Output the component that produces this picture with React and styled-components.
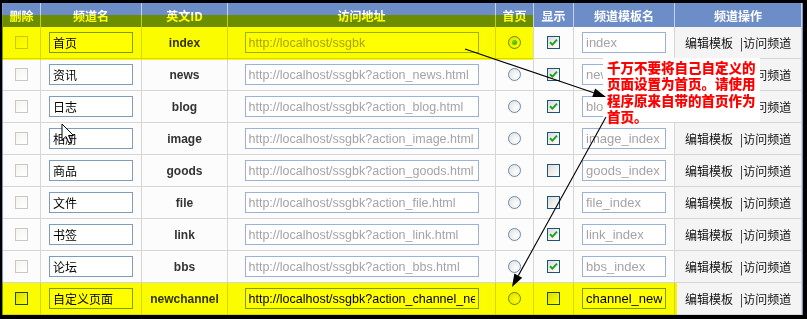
import React from "react";
import styled, { createGlobalStyle, css } from "styled-components";

const GlobalStyle = createGlobalStyle`
  html, body {
    margin: 0;
    padding: 0;
    background: #000;
  }
  * {
    box-sizing: border-box;
  }
`;

const CJK = `"Noto Sans CJK SC", "Noto Sans", sans-serif`;
const LATIN = `"Liberation Sans", Arial, "Noto Sans CJK SC", sans-serif`;

const Frame = styled.div`
  position: relative;
  width: 807px;
  height: 319px;
  padding: 3px 4px 4px 2px;
  background: #000;
  overflow: hidden;
`;

const Board = styled.div`
  position: relative;
  height: 100%;
  background: #fcfcfc;
  border-left: 1px solid #7a98cc;
  border-right: 1px solid #7a98cc;
  display: grid;
  grid-template-columns: 38px 101px 86px 268px 38px 40px 101px 1fr;
  grid-template-rows: 24px repeat(9, 32px);
`;

const HeadCell = styled.div`
  display: flex;
  align-items: center;
  justify-content: center;
  padding-top: 1px;
  background: #6d8dc9;
  color: #fff;
  font: bold 12px ${CJK};
  border-right: 1px solid #c4d1ec;
  &:last-child {
    border-right: none;
  }
`;

const Cell = styled.div`
  display: flex;
  align-items: center;
  justify-content: ${(p) => p.$align || "center"};
  padding-left: ${(p) => p.$pad || 0}px;
  border-right: 1px solid #d6d6d6;
  border-bottom: 1px solid #d6d6d6;
  background: ${(p) => (p.$shade ? "#f4f4f4" : "#fcfcfc")};
  &:last-child {
    border-right: none;
  }
`;

const Field = styled.input`
  width: ${(p) => p.$w}px;
  height: 21px;
  margin: 0;
  padding: 0 3px;
  border: 1px solid ${(p) => (p.$dim ? "#9bb2d4" : "#7f9db9")};
  background: #fff;
  color: ${(p) => (p.$dim ? "#a4a4a4" : "#000")};
  font-size: ${(p) => p.$size || 13}px;
  font-family: ${(p) => (p.$cjk ? CJK : LATIN)};
  line-height: 19px;
  outline: none;
`;

const IdText = styled.span`
  font: bold 12px ${LATIN};
  color: #333;
`;

const OpText = styled.span`
  font: 12px ${CJK};
  color: #111;
  white-space: nowrap;
`;

const OpLink = styled.span`
  margin-left: 7px;
`;

const Box = styled.span`
  position: relative;
  width: 13px;
  height: 13px;
  display: inline-flex;
  align-items: center;
  justify-content: center;
  ${(p) =>
    p.$faded
      ? css`
          border: 1px solid #c9c9c1;
          background: linear-gradient(135deg, #f4f4f0, #ffffff);
        `
      : css`
          border: 1px solid #1c5180;
          background: linear-gradient(135deg, #dcdcd6, #ffffff);
        `}
`;

const Radio = styled.span`
  width: 13px;
  height: 13px;
  border-radius: 50%;
  border: 1px solid #6a88b6;
  background: radial-gradient(circle at 65% 65%, #ffffff 0%, #e4e4de 80%);
  display: inline-flex;
  align-items: center;
  justify-content: center;
  &::after {
    content: "";
    display: ${(p) => (p.$on ? "block" : "none")};
    width: 5px;
    height: 5px;
    border-radius: 50%;
    background: radial-gradient(circle at 35% 35%, #6ee06e, #21a121);
  }
`;

const Highlight = styled.div`
  position: absolute;
  left: -1px;
  top: ${(p) => p.$top}px;
  width: ${(p) => p.$w}px;
  height: ${(p) => p.$h}px;
  background: #ffff00;
  mix-blend-mode: multiply;
  pointer-events: none;
  z-index: 2;
`;

const Note = styled.div`
  position: absolute;
  left: 603px;
  top: 58px;
  width: 157px;
  height: 64px;
  padding: 1px 0 0 4px;
  background: #fff;
  color: #ff0000;
  font: 900 13.5px/16.3px ${CJK};
  z-index: 3;
`;

const Overlay = styled.svg`
  position: absolute;
  left: 0;
  top: 0;
  z-index: 4;
  pointer-events: none;
`;

const Check = () => (
  <svg width="9" height="9" viewBox="0 0 9 9">
    <path d="M1 4.2 L3.4 6.6 L8 1.6" fill="none" stroke="#21a121" strokeWidth="2" />
  </svg>
);

const BASE = "http://localhost/ssgbk";

const rows = [
  { name: "首页", id: "index", url: BASE, home: true, show: true, tpl: "index" },
  { name: "资讯", id: "news", url: `${BASE}?action_news.html`, show: true, tpl: "news_index" },
  { name: "日志", id: "blog", url: `${BASE}?action_blog.html`, show: true, tpl: "blog_index" },
  { name: "相册", id: "image", url: `${BASE}?action_image.html`, show: true, tpl: "image_index" },
  { name: "商品", id: "goods", url: `${BASE}?action_goods.html`, show: false, tpl: "goods_index" },
  { name: "文件", id: "file", url: `${BASE}?action_file.html`, show: false, tpl: "file_index" },
  { name: "书签", id: "link", url: `${BASE}?action_link.html`, show: true, tpl: "link_index" },
  { name: "论坛", id: "bbs", url: `${BASE}?action_bbs.html`, show: true, tpl: "bbs_index" },
  {
    name: "自定义页面",
    id: "newchannel",
    url: `${BASE}?action_channel_newchannel.html`,
    show: false,
    tpl: "channel_newchannel",
    custom: true,
  },
];

const heads = ["删除", "频道名", "英文ID", "访问地址", "首页", "显示", "频道模板名", "频道操作"];

const Arrow = ({ x1, y1, x2, y2 }) => {
  const dx = x2 - x1;
  const dy = y2 - y1;
  const len = Math.hypot(dx, dy);
  const ux = dx / len;
  const uy = dy / len;
  const bx = x2 - ux * 13;
  const by = y2 - uy * 13;
  const px = -uy * 4.5;
  const py = ux * 4.5;
  return (
    <g>
      <line x1={x1} y1={y1} x2={bx} y2={by} stroke="#000" strokeWidth="1.1" />
      <polygon points={`${x2},${y2} ${bx + px},${by + py} ${bx - px},${by - py}`} fill="#000" />
    </g>
  );
};

export default function App() {
  return (
    <>
      <GlobalStyle />
      <Frame>
        <Board>
          {heads.map((h) => (
            <HeadCell key={h}>{h}</HeadCell>
          ))}
          {rows.map((r) => (
            <React.Fragment key={r.id}>
              <Cell>
                <Box $faded={!r.custom} />
              </Cell>
              <Cell>
                <Field $w={84} $cjk $size={12} defaultValue={r.name} readOnly />
              </Cell>
              <Cell>
                <IdText>{r.id}</IdText>
              </Cell>
              <Cell>
                <Field $w={234} $size={12.5} $dim={!r.custom} defaultValue={r.url} readOnly />
              </Cell>
              <Cell>
                <Radio $on={r.home} />
              </Cell>
              <Cell>
                <Box>{r.show && <Check />}</Box>
              </Cell>
              <Cell>
                <Field $w={84} $dim={!r.custom} defaultValue={r.tpl} readOnly />
              </Cell>
              <Cell $align="flex-start" $pad={10} $shade>
                <OpText>
                  编辑模板<OpLink>|访问频道</OpLink>
                </OpText>
              </Cell>
            </React.Fragment>
          ))}
          <Highlight $top={12} $w={531} $h={45} />
          <Highlight $top={280} $w={675} $h={32} />
        </Board>
        <Note>
          千万不要将自己自定义的
          <br />
          页面设置为首页。请使用
          <br />
          程序原来自带的首页作为
          <br />
          首页。
        </Note>
        <Overlay width="807" height="319">
          <Arrow x1={465} y1={49} x2={606} y2={97} />
          <Arrow x1={606} y1={117} x2={512} y2={287} />
          <path
            d="M62 124 L62 140 L66 136.5 L69 143 L71.5 142 L68.5 135.5 L73.5 135.5 Z"
            fill="#fff"
            stroke="#000"
            strokeWidth="1"
          />
        </Overlay>
      </Frame>
    </>
  );
}
